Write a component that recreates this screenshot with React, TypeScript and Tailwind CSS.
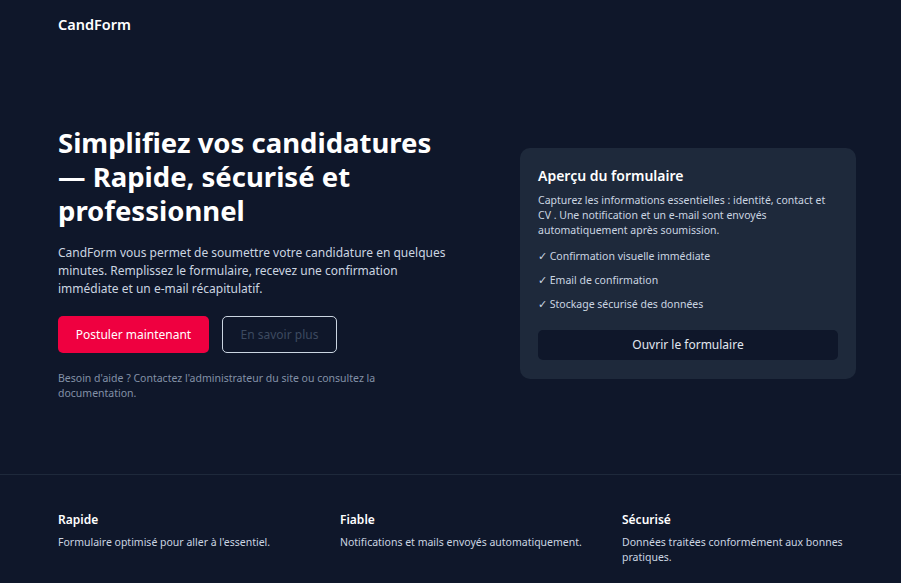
export default function App() {
  return (
    <div className="min-h-screen bg-[#0f172a] text-white font-['Noto_Sans',sans-serif]">
      {/* header */}
      <header className="pl-[58px] pr-[45px] h-[50px] flex items-center">
        <span className="text-[14.5px] font-semibold">CandForm</span>
      </header>

      {/* hero */}
      <section className="pl-[58px] pr-[45px] pt-[76px] pb-[73px] flex items-center justify-between">
        <div className="w-[398px]">
          <h1 className="text-[27.5px] leading-[34px] font-bold">
            Simplifiez vos candidatures — Rapide, sécurisé et professionnel
          </h1>
          <p className="mt-[16px] text-[12px] leading-[18px] text-[#cbd5e1]">
            CandForm vous permet de soumettre votre candidature en quelques minutes. Remplissez le formulaire,
            recevez une confirmation immédiate et un e-mail récapitulatif.
          </p>
          <div className="mt-[18px] flex gap-[13px]">
            <button className="h-[37px] w-[151px] rounded-[5px] bg-[#ef0040] text-[12px] text-white">
              Postuler maintenant
            </button>
            <button className="h-[37px] w-[115px] rounded-[5px] border border-[#cbd5e1] text-[12px] text-[#3d4a60]">
              En savoir plus
            </button>
          </div>
          <p className="mt-[18px] text-[10.5px] leading-[15px] text-[#8391a7] w-[340px]">
            Besoin d'aide ? Contactez l'administrateur du site ou consultez la documentation.
          </p>
        </div>

        <div className="w-[336px] rounded-[10px] bg-[#1e293b] px-[18px] pt-[18px] pb-[19px]">
          <h2 className="text-[14px] font-semibold leading-[20px]">Aperçu du formulaire</h2>
          <p className="mt-[7px] text-[10.5px] leading-[15px] text-[#cbd5e1]">
            Capturez les informations essentielles : identité, contact et CV . Une notification et un e-mail sont
            envoyés automatiquement après soumission.
          </p>
          <ul className="mt-[6px] text-[10.5px] text-[#cbd5e1]">
            <li className="leading-[24px]">✓ Confirmation visuelle immédiate</li>
            <li className="leading-[24px]">✓ Email de confirmation</li>
            <li className="leading-[24px]">✓ Stockage sécurisé des données</li>
          </ul>
          <button className="mt-[14px] w-full h-[30px] rounded-[5px] bg-[#0f172a] text-[12px] text-[#e2e8f0]">
            Ouvrir le formulaire
          </button>
        </div>
      </section>

      {/* footer features */}
      <footer className="border-t border-[#1e293b]">
        <div className="pl-[58px] pt-[37px] pb-[20px] grid grid-cols-[258px_258px_258px] gap-x-6">
          {[
            ['Rapide', "Formulaire optimisé pour aller à l'essentiel."],
            ['Fiable', 'Notifications et mails envoyés automatiquement.'],
            ['Sécurisé', 'Données traitées conformément aux bonnes pratiques.'],
          ].map(([title, text]) => (
            <div key={title}>
              <h3 className="text-[12px] font-semibold leading-[16px]">{title}</h3>
              <p className="mt-[7px] text-[10.5px] leading-[15px] text-[#cbd5e1]">{text}</p>
            </div>
          ))}
        </div>
      </footer>
    </div>
  )
}
